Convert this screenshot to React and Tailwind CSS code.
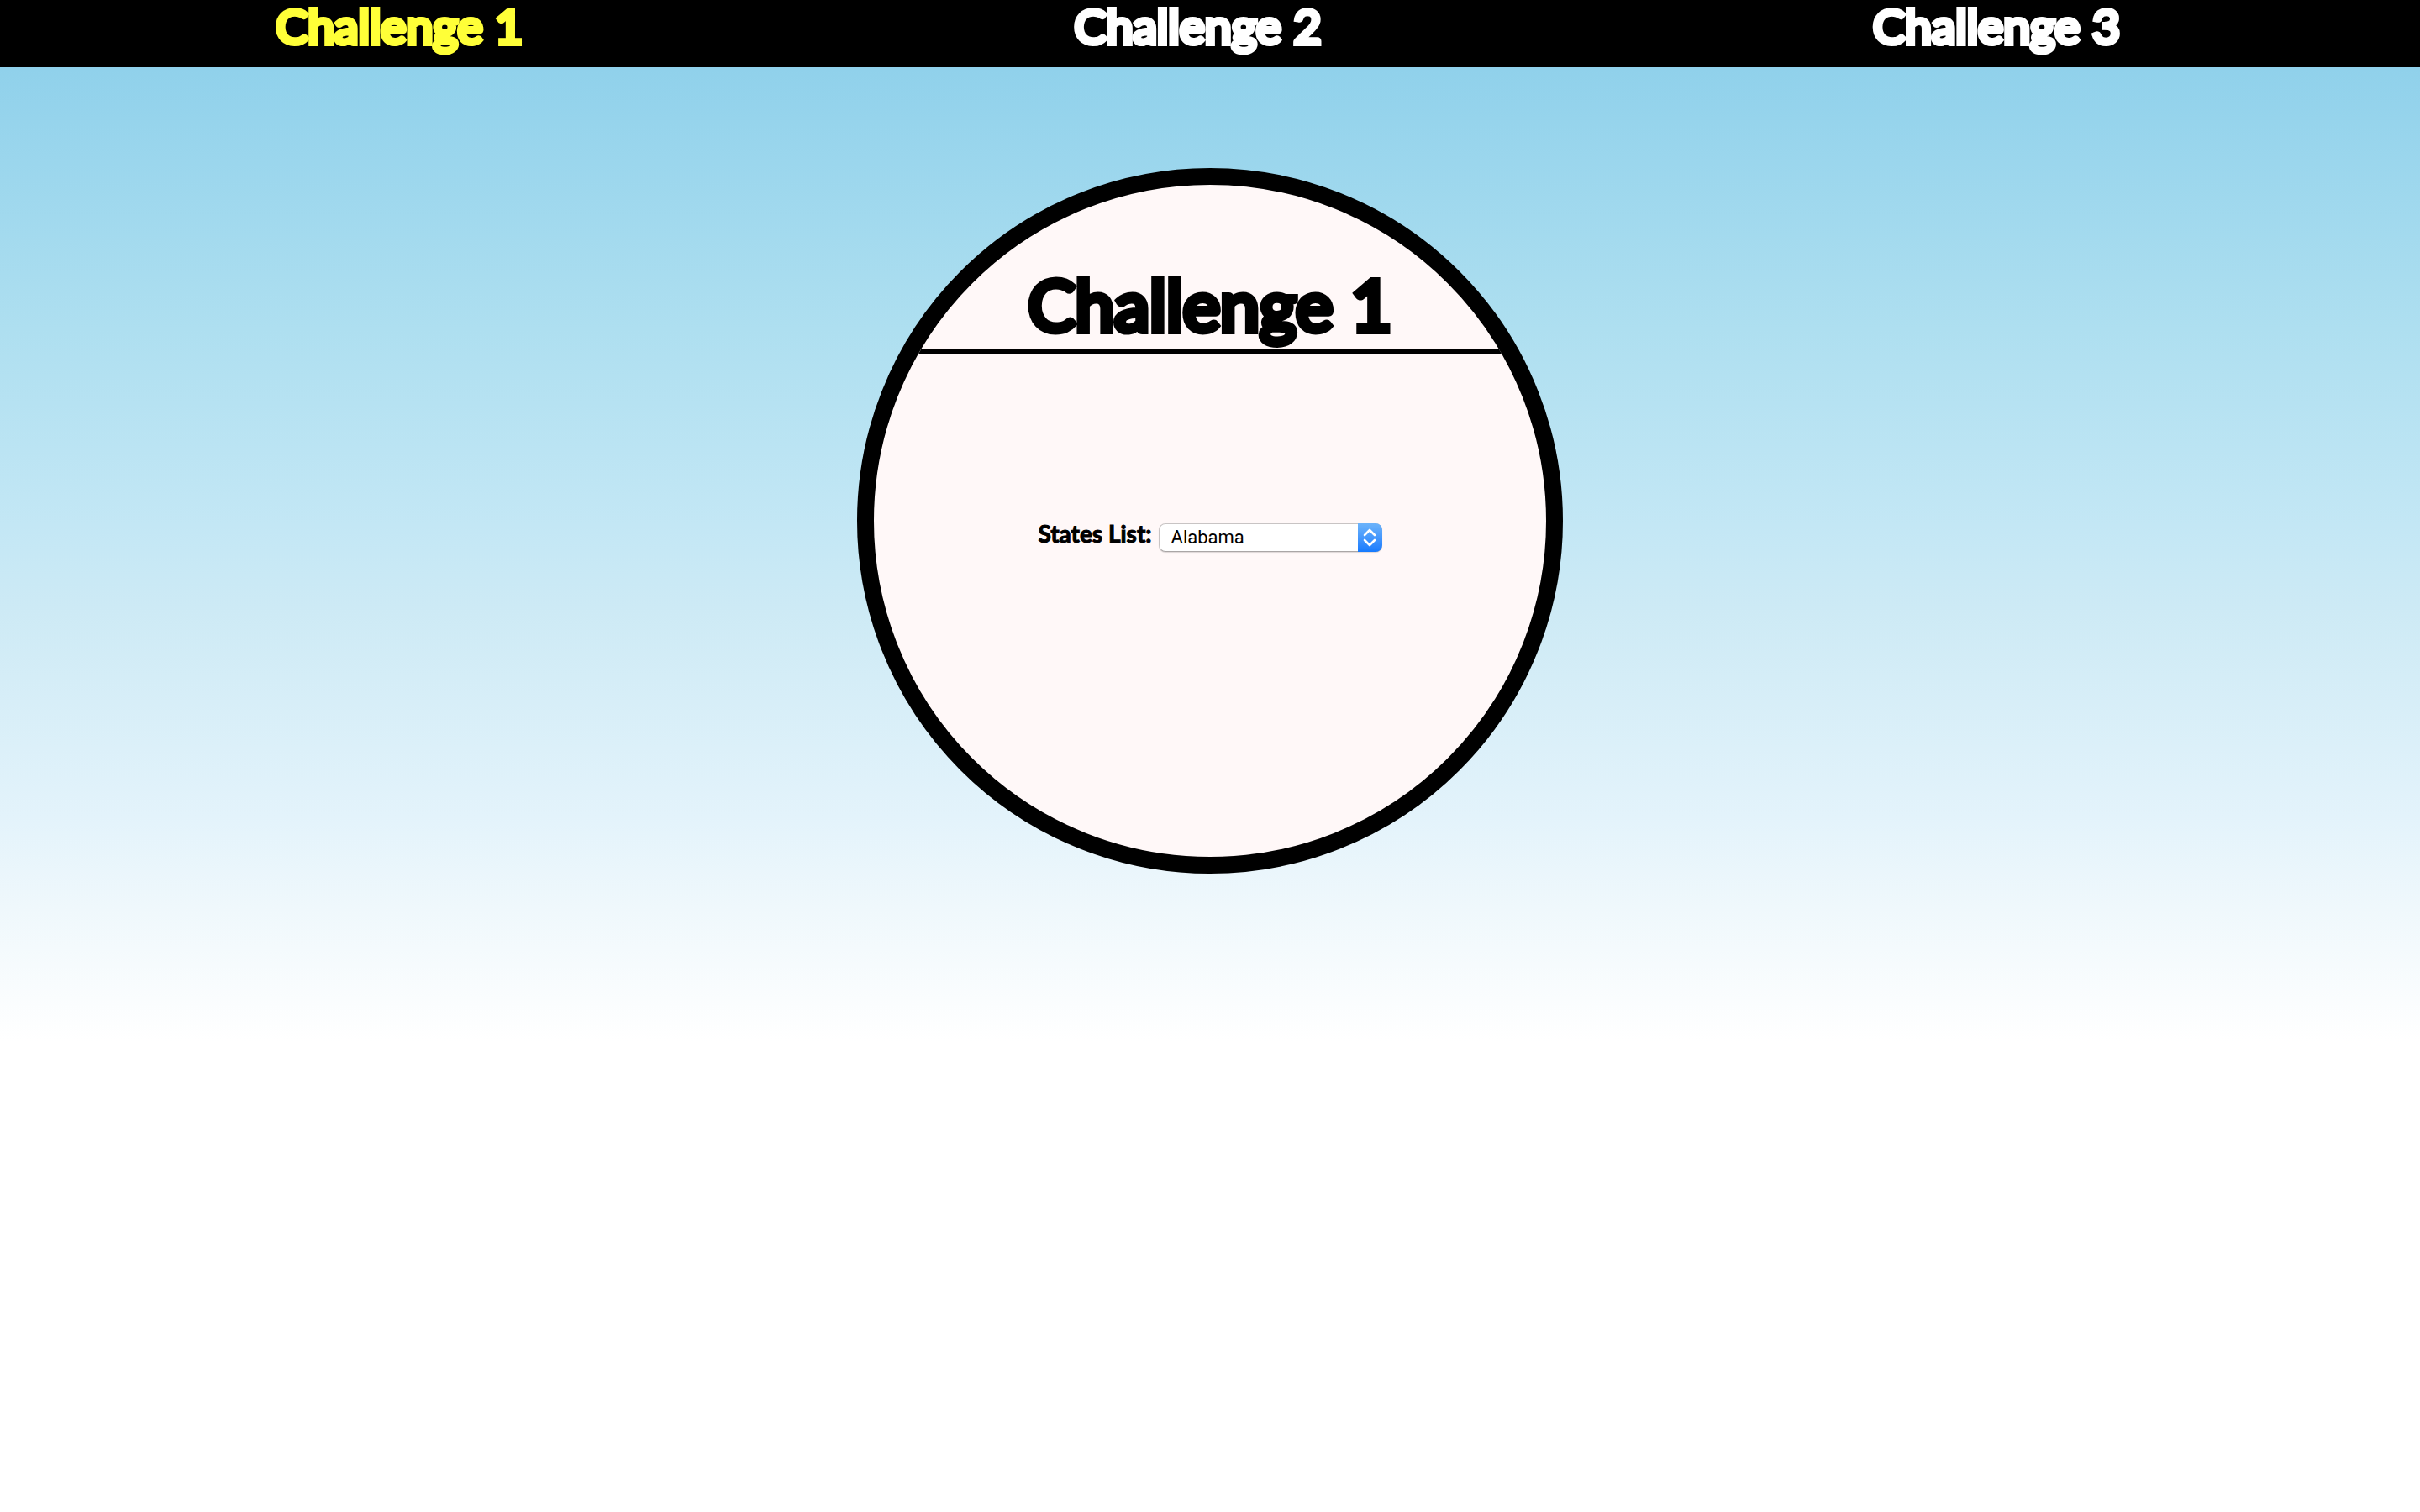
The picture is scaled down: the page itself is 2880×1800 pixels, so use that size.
const STATES = ['Alabama', 'Alaska', 'Arizona', 'Arkansas', 'California', 'Colorado', 'Connecticut', 'Delaware', 'Florida', 'Georgia'];

const DISPLAY = "font-['Lato',sans-serif] [stroke-linejoin:round] [paint-order:stroke]";

const LINKS = [
  { label: 'Challenge 1', active: true },
  { label: 'Challenge 2', active: false },
  { label: 'Challenge 3', active: false },
];

export default function App() {
  return (
    <div className="min-h-screen bg-white bg-[linear-gradient(#89ceea_0px,#90d1eb_80px,#aedff0_392px,#c3e7f5_624px,#cdeaf5_723px,#e3f3fb_972px,#eff8fc_1080px,#ffffff_1240px)]">
      <nav className={`flex h-20 bg-black text-[57px] leading-[60px] ${DISPLAY}`}>
        {LINKS.map((link) => (
          <div key={link.label} className="w-[33%] text-center">
            <a
              href="#"
              className={link.active ? 'text-[#ffff38] [-webkit-text-stroke:6px_#ffff38]' : 'text-white [-webkit-text-stroke:6px_#ffffff]'}
            >
              {link.label}
            </a>
          </div>
        ))}
      </nav>

      <main className="flex justify-center pt-30">
        <section className="flex size-[840px] flex-col overflow-hidden rounded-full border-20 border-black bg-[#fff8f8]">
          <h1 className={`border-b-6 border-black pt-[92px] pb-1 text-center text-[84px] leading-[100px] font-normal text-black [-webkit-text-stroke:8px_#000000] ${DISPLAY}`}>
            Challenge 1
          </h1>
          <div className="flex items-start justify-center gap-2 pt-[201px]">
            <label htmlFor="states" className={`text-[28px] leading-6 font-bold text-black [-webkit-text-stroke:1px_#000000] ${DISPLAY}`}>
              States List:
            </label>
            <div className="relative">
              <select
                id="states"
                defaultValue="Alabama"
                className="block h-[34px] w-[266px] appearance-none rounded-lg border border-[#c8c4c4] border-b-[#aaa6a6] bg-white pr-8 pl-3.5 font-['Roboto',sans-serif] text-[22px] leading-8 text-black shadow-[0_1px_1px_#00000022]"
              >
                {STATES.map((state) => (
                  <option key={state}>{state}</option>
                ))}
              </select>
              <span className="pointer-events-none absolute inset-y-0 right-0 flex w-[29px] items-center justify-center rounded-r-lg bg-linear-to-b from-[#6cb3fa] to-[#147afe]">
                <svg width="16" height="22" viewBox="0 0 16 22" fill="none" stroke="white" strokeWidth="2.6" strokeLinecap="round" strokeLinejoin="round" aria-hidden="true">
                  <path d="M2 8 L8 2 L14 8 M2 14 L8 20 L14 14" />
                </svg>
              </span>
            </div>
          </div>
        </section>
      </main>
    </div>
  );
}
